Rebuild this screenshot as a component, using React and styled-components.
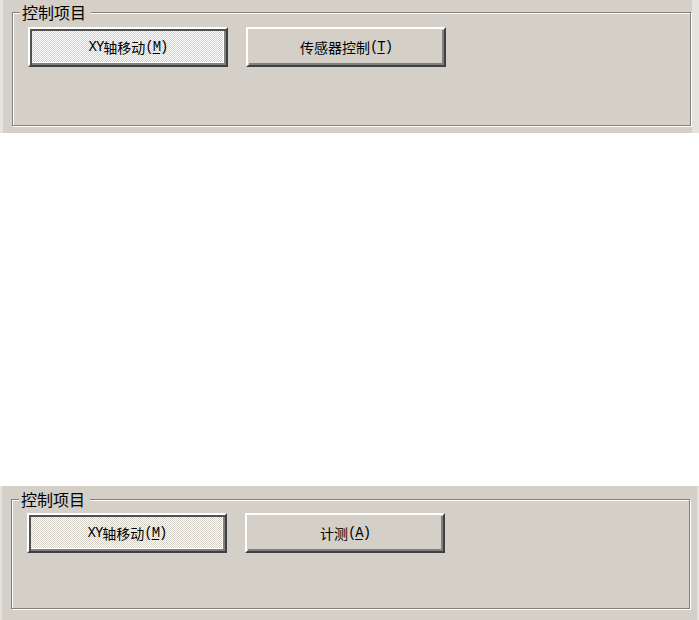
import React from "react"
import styled, { createGlobalStyle } from "styled-components"

const GlobalStyle = createGlobalStyle`
  body {
    margin: 0;
    background: #fff;
    font-family: "Noto Sans CJK SC", "Noto Sans", sans-serif;
  }
`

const Page = styled.div`
  width: 699px;
  display: flex;
  flex-direction: column;
  gap: ${props => props.gap}px;
`

const Frame = styled.div`
  height: ${props => props.height}px;
  background: #e6e3de;
  padding: 0 ${props => props.padRight}px 0 ${props => props.padLeft}px;
  display: flex;
`

const Panel = styled.div`
  flex: 1;
  background: #d4d0c8;
  padding: ${props => props.top}px 0 0 ${props => props.left}px;
  box-sizing: border-box;
`

const GroupBox = styled.div`
  position: relative;
  width: ${props => props.width}px;
  height: ${props => props.height}px;
  box-sizing: border-box;
  border: 1px solid #808080;
  box-shadow: inset 1px 1px #fff, 1px 1px #fff;
  display: flex;
  align-items: flex-start;
  gap: 18px;
  padding: ${props => props.padTop}px 0 0 15px;
`

const Legend = styled.span`
  position: absolute;
  top: -11px;
  left: 7px;
  padding: 0 5px 0 2px;
  background: #d4d0c8;
  font-size: 16px;
  line-height: 20px;
  color: #000;
`

const Button = styled.button`
  width: 200px;
  height: 40px;
  box-sizing: border-box;
  margin: 0;
  padding: 0;
  border: 2px solid;
  border-color: #fff #404040 #404040 #fff;
  font-family: "Liberation Mono", "Noto Sans CJK SC", monospace;
  font-size: 14px;
  color: #000;
  display: flex;
  align-items: center;
  justify-content: center;
  background: ${props =>
    props.checked
      ? "repeating-conic-gradient(#fff 0 25%, #d4d0c8 0 50%) 0 0 / 2px 2px"
      : "#d4d0c8"};
  box-shadow: ${props =>
    props.checked
      ? "inset 2px 2px #505050, inset -2px -2px #808080, inset -3px -3px #fff"
      : "inset 1px 1px #d4d0c8, inset -2px -2px #808080"};
  & u {
    text-decoration: underline;
    text-underline-offset: 2px;
  }
`

const Latin = styled.span`
  letter-spacing: -1px;
`

const ControlGroup = ({ second, mnemonic, groupHeight, padTop }) => (
  <GroupBox width={679} height={groupHeight} padTop={padTop}>
    <Legend>控制项目</Legend>
    <Button checked>
      <Latin>XY</Latin>轴移动<Latin>(<u>M</u>)</Latin>
    </Button>
    <Button>
      {second}<Latin>(<u>{mnemonic}</u>)</Latin>
    </Button>
  </GroupBox>
)

const App = () => (
  <Page gap={353}>
    <GlobalStyle />
    <Frame height={133} padLeft={3} padRight={7}>
      <Panel top={12} left={9}>
        <ControlGroup second="传感器控制" mnemonic="T" groupHeight={114} padTop={14} />
      </Panel>
    </Frame>
    <Frame height={134} padLeft={2} padRight={2}>
      <Panel top={13} left={9}>
        <ControlGroup second="计测" mnemonic="A" groupHeight={110} padTop={13} />
      </Panel>
    </Frame>
  </Page>
)

export default App
